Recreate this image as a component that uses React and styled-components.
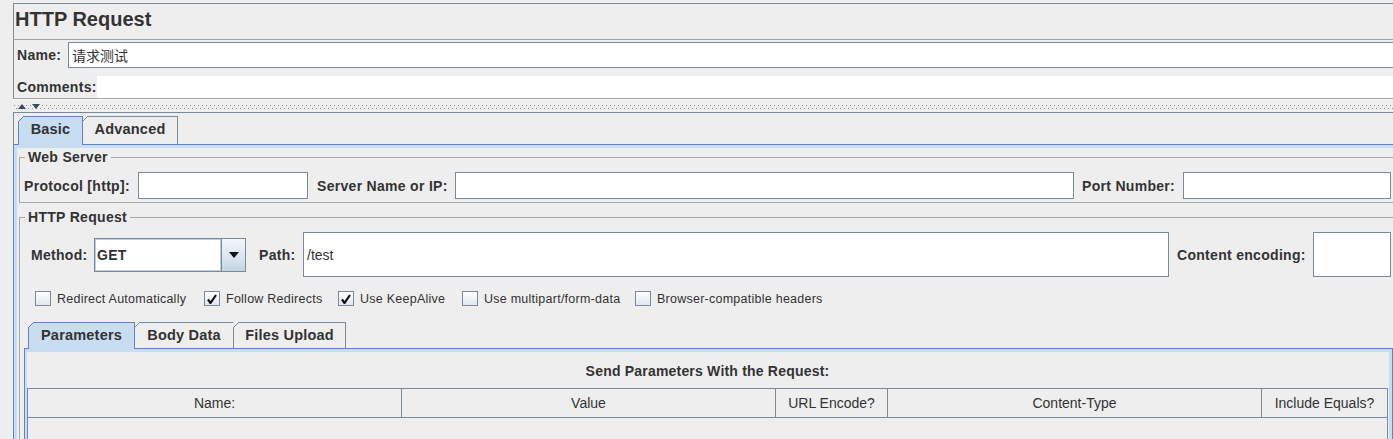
import React from 'react'
import styled, { createGlobalStyle } from 'styled-components'

const checks = [
  { label: 'Redirect Automatically', checked: false, width: 169 },
  { label: 'Follow Redirects', checked: true, width: 134 },
  { label: 'Use KeepAlive', checked: true, width: 124 },
  { label: 'Use multipart/form-data', checked: false, width: 173 },
  { label: 'Browser-compatible headers', checked: false, width: 220 },
];

const columns = ['Name:', 'Value', 'URL Encode?', 'Content-Type', 'Include Equals?'];

function CheckMark() {
  return (
    <svg width="10" height="10" viewBox="0 0 10 10">
      <path d="M1 5.5 L3.5 9 L9 1" fill="none" stroke="#111" strokeWidth="2.2" />
    </svg>
  );
}

function App() {
  return (
    <Page>
      <GlobalStyle />
      <TitleBar>HTTP Request</TitleBar>

      <NamePanel>
        <FieldRow $h={26}>
          <Label $w={51}>Name:</Label>
          <TextBox $h={26}>请求测试</TextBox>
        </FieldRow>
        <FieldRow $h={22}>
          <Label $w={80}>Comments:</Label>
          <CommentArea />
        </FieldRow>
      </NamePanel>

      <Splitter>
        <svg width="8" height="5" viewBox="0 0 8 5"><polygon points="0,5 8,5 4,0" fill="#3a4a5a" /></svg>
        <svg width="8" height="5" viewBox="0 0 8 5"><polygon points="0,0 8,0 4,5" fill="#3a4a5a" /></svg>
      </Splitter>

      <OuterPane>
        <TabStrip $pl={4} $pt={3} $edge>
          <Tab $w={65} $h={28} $sel>Basic</Tab>
          <Tab $w={96} $h={28}>Advanced</Tab>
        </TabStrip>

        <TabBody>
          <Group>
            <GroupTitle>Web Server</GroupTitle>
            <Row $h={27} $mt={7}>
              <Label $w={114}>Protocol [http]:</Label>
              <TextBox $w={170} $h={27} />
              <Label $w={138} $ml={9}>Server Name or IP:</Label>
              <TextBox $w={619} $h={27} />
              <Label $w={101} $ml={8}>Port Number:</Label>
              <TextBox $w={208} $h={27} />
            </Row>
          </Group>

          <Group $mt={6}>
            <GroupTitle>HTTP Request</GroupTitle>
            <Row $h={45} $mt={7}>
              <Label $w={63} $ml={7}>Method:</Label>
              <Combo>
                <ComboField>GET</ComboField>
                <ComboButton>
                  <svg width="10" height="6" viewBox="0 0 10 6"><polygon points="0,0 10,0 5,6" fill="#111" /></svg>
                </ComboButton>
              </Combo>
              <Label $w={44} $ml={13}>Path:</Label>
              <TextBox $w={866} $h={45}>/test</TextBox>
              <Label $w={136} $ml={8}>Content encoding:</Label>
              <TextBox $w={78} $h={45} />
            </Row>

            <CheckRow>
              {checks.map((c) => (
                <CheckItem key={c.label} $w={c.width}>
                  <CheckBox>{c.checked && <CheckMark />}</CheckBox>
                  <CheckText>{c.label}</CheckText>
                </CheckItem>
              ))}
            </CheckRow>

            <TabStrip $pl={3} $mt={16}>
              <Tab $w={107} $h={26} $sel>Parameters</Tab>
              <Tab $w={100} $h={26}>Body Data</Tab>
              <Tab $w={113} $h={26}>Files Upload</Tab>
            </TabStrip>

            <InnerBody>
              <SectionTitle>Send Parameters With the Request:</SectionTitle>
              <Table>
                <HeaderRow>
                  {columns.map((col) => (
                    <HeaderCell key={col}>{col}</HeaderCell>
                  ))}
                </HeaderRow>
              </Table>
            </InnerBody>
          </Group>
        </TabBody>
      </OuterPane>
    </Page>
  )
}

const GlobalStyle = createGlobalStyle`
  body {
    margin: 0;
    background: #eeeeee;
    color: #333333;
    font-family: "Liberation Sans", Arial, "Noto Sans CJK SC", sans-serif;
    overflow: hidden;
  }
`;

const Page = styled.div`
  width: 1400px;
  height: 439px;
  padding-top: 3px;
  box-sizing: border-box;
  overflow: hidden;
`;

const TitleBar = styled.div`
  margin-left: 13px;
  height: 36px;
  box-sizing: border-box;
  border-top: 1px solid #7a8a99;
  border-left: 1px solid #7a8a99;
  padding: 3px 0 0 1px;
  font-size: 20px;
  font-weight: bold;
  line-height: 24px;
`;

const NamePanel = styled.div`
  margin-left: 13px;
  border-top: 1px solid #a3a3a3;
  border-bottom: 1px solid #a3a3a3;
  border-left: 1px solid #7a8a99;
  padding: 2px 0 0 3px;
  display: flex;
  flex-direction: column;
  gap: 8px;
`;

const FieldRow = styled.div`
  display: flex;
  align-items: center;
  height: ${(p) => p.$h}px;
`;

const Label = styled.div`
  flex: none;
  width: ${(p) => p.$w}px;
  margin-left: ${(p) => p.$ml || 0}px;
  font-size: 14px;
  font-weight: bold;
  letter-spacing: 0.3px;
  white-space: nowrap;
`;

const TextBox = styled.div`
  flex: ${(p) => (p.$w ? 'none' : 1)};
  width: ${(p) => (p.$w ? `${p.$w}px` : 'auto')};
  height: ${(p) => p.$h}px;
  box-sizing: border-box;
  border: 1px solid #7a8a99;
  background: #ffffff;
  display: flex;
  align-items: center;
  padding-left: 3px;
  font-size: 14px;
  font-family: "Liberation Sans", "Noto Sans CJK SC", sans-serif;
`;

const CommentArea = styled.div`
  flex: 1;
  height: 22px;
  background: #ffffff;
`;

const Splitter = styled.div`
  height: 13px;
  margin-left: 13px;
  padding-left: 5px;
  box-sizing: border-box;
  border-top: 1px solid #f8f8f8;
  display: flex;
  align-items: center;
  gap: 6px;
  background-image:
    radial-gradient(circle at 1.5px 5.5px, #8a98a6 0.7px, transparent 1px),
    radial-gradient(circle at 3.5px 8.5px, #8a98a6 0.7px, transparent 1px);
  background-size: 4px 12px;
  background-repeat: repeat-x;
`;

const OuterPane = styled.div`
  margin-left: 13px;
  border-top: 1px solid #7a8a99;
`;

const TabStrip = styled.div`
  display: flex;
  align-items: flex-end;
  padding-left: ${(p) => p.$pl}px;
  padding-top: ${(p) => p.$pt || 0}px;
  margin-top: ${(p) => p.$mt || 0}px;
  margin-left: ${(p) => (p.$mt ? 1 : 0)}px;
  border-left: ${(p) => (p.$edge ? '1px solid #7a8a99' : 'none')};
  position: relative;
  z-index: 1;
`;

const Tab = styled.div`
  flex: none;
  position: relative;
  width: ${(p) => p.$w}px;
  height: ${(p) => (p.$sel ? p.$h + 1 : p.$h)}px;
  margin-bottom: ${(p) => (p.$sel ? -1 : 0)}px;
  box-sizing: border-box;
  border: 1px solid ${(p) => (p.$sel ? '#6382bf' : '#7a8a99')};
  border-bottom: none;
  background: ${(p) => (p.$sel ? '#c8ddf2' : '#eeeeee')};
  display: flex;
  align-items: center;
  justify-content: center;
  padding-bottom: ${(p) => (p.$h > 27 ? 4 : 2) + (p.$sel ? 1 : 0)}px;
  font-size: 14.5px;
  font-weight: bold;
  letter-spacing: 0.2px;
  z-index: ${(p) => (p.$sel ? 2 : 1)};

  & + & {
    margin-left: -1px;
  }

  &::before {
    content: "";
    position: absolute;
    left: -1px;
    top: -1px;
    width: 7px;
    height: 7px;
    background: linear-gradient(135deg, #eeeeee 0 3.7px, ${(p) => (p.$sel ? '#6382bf' : '#7a8a99')} 3.7px 4.8px, transparent 4.8px);
  }
`;

const TabBody = styled.div`
  border-top: 1px solid #6382bf;
  border-left: 1px solid #6382bf;
  box-shadow: inset 3px 3px 0 #c8ddf2;
  padding: 4px 0 0 5px;
  height: 300px;
`;

const Group = styled.fieldset`
  margin: ${(p) => p.$mt || 0}px 0 0 0;
  padding: 0 4px 3px 4px;
  border: 1px solid #a8a8a8;
  min-width: 0;
`;

const GroupTitle = styled.legend`
  margin-left: 1px;
  padding: 0 3px;
  font-size: 14px;
  font-weight: bold;
  letter-spacing: 0.3px;
  line-height: 16px;
`;

const Row = styled.div`
  display: flex;
  align-items: center;
  height: ${(p) => p.$h}px;
  margin-top: ${(p) => p.$mt}px;
`;

const Combo = styled.div`
  flex: none;
  width: 152px;
  height: 34px;
  box-sizing: border-box;
  border: 1px solid #7a8a99;
  display: flex;
`;

const ComboField = styled.div`
  flex: 1;
  background: #ffffff;
  box-shadow: inset 0 0 0 1px #b8cfe5;
  display: flex;
  align-items: center;
  padding-left: 2px;
  font-size: 14px;
  font-weight: bold;
  letter-spacing: 0.3px;
`;

const ComboButton = styled.div`
  flex: none;
  width: 23px;
  border-left: 1px solid #7a8a99;
  background: linear-gradient(180deg, #f3f7fb 0%, #dce6f0 55%, #c4d3e2 100%);
  display: flex;
  align-items: center;
  justify-content: center;
`;

const CheckRow = styled.div`
  display: flex;
  align-items: center;
  height: 15px;
  margin-top: 14px;
  padding-left: 11px;
`;

const CheckItem = styled.div`
  flex: none;
  width: ${(p) => p.$w}px;
  display: flex;
  align-items: center;
  gap: 6px;
`;

const CheckBox = styled.div`
  flex: none;
  width: 16px;
  height: 15px;
  box-sizing: border-box;
  border: 1px solid #7a8a99;
  background: linear-gradient(180deg, #ffffff 0%, #dfe7f0 100%);
  display: flex;
  align-items: center;
  justify-content: center;
`;

const CheckText = styled.span`
  font-size: 12.5px;
  letter-spacing: 0.25px;
  white-space: nowrap;
`;

const InnerBody = styled.div`
  width: 1369px;
  height: 120px;
  box-sizing: border-box;
  border: 1px solid #6382bf;
  border-bottom: none;
  box-shadow: inset 2px 3px 0 #c8ddf2, inset -3px 0 0 #c8ddf2;
  padding: 3px 0 0 2px;
`;

const SectionTitle = styled.div`
  width: 1361px;
  padding: 11px 0 9px;
  line-height: 16px;
  text-align: center;
  font-size: 14px;
  font-weight: bold;
  letter-spacing: 0.2px;
`;

const Table = styled.div`
  width: 1361px;
  height: 80px;
  box-sizing: border-box;
  border: 1px solid #7a8a99;
  border-bottom: none;
`;

const HeaderRow = styled.div`
  display: grid;
  grid-template-columns: 374px 374px 112px 374px 1fr;
  height: 29px;
  box-sizing: border-box;
  border-bottom: 1px solid #7a8a99;
`;

const HeaderCell = styled.div`
  display: flex;
  align-items: center;
  justify-content: center;
  border-right: 1px solid #7a8a99;
  font-size: 14px;

  &:last-child {
    border-right: none;
  }
`;

export default App
